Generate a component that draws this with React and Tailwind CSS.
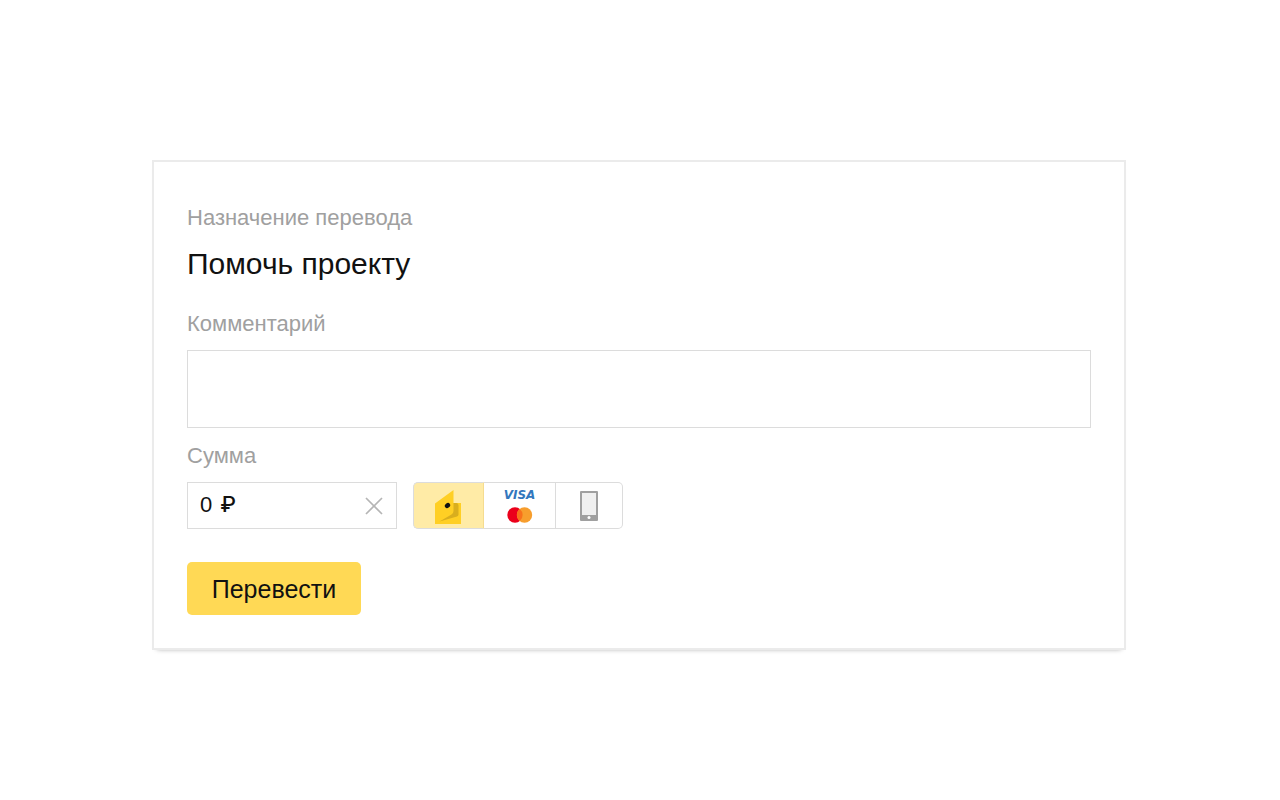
import { useState } from "react";

function WalletIcon() {
  return (
    <svg width="27" height="34" viewBox="0 0 27 34" className="mt-[2px]" aria-hidden="true">
      <path d="M0 13.500 18.500 0V13H26V34H0Z" fill="#ffcf24" />
      <path d="M18.500 13H21.500Q23.500 13 23.500 15.500V24.500Q23.500 26 22 26.500L4.500 31.500 16.500 24.500Q18.500 23.300 18.500 21Z" fill="#d9ae1e" />
      <ellipse cx="12.500" cy="15.500" rx="2.300" ry="2.900" transform="rotate(50 12.500 15.500)" fill="#111" />
    </svg>
  );
}

function CardsIcon() {
  return (
    <svg width="26" height="16" viewBox="0 0 26 16" aria-hidden="true">
      <circle cx="8" cy="8" r="7.700" fill="#eb001b" />
      <circle cx="17.500" cy="8" r="7.700" fill="#f79e2d" />
      <path d="M12.750 2a7.700 7.700 0 0 1 0 12 7.700 7.700 0 0 1 0-12Z" fill="#f8701b" />
    </svg>
  );
}

function PhoneIcon() {
  return (
    <svg width="18" height="30" viewBox="0 0 18 30" aria-hidden="true">
      <rect width="18" height="30" rx="1" fill="#a0a0a0" />
      <rect x="2" y="2" width="14" height="22" fill="#f0f0f0" />
      <circle cx="9" cy="26.500" r="1.500" fill="#fff" />
    </svg>
  );
}

const labelClass = "block text-[22px] leading-7 text-[#a0a0a0]";
const optionClass =
  "relative flex cursor-pointer items-center justify-center border-y border-[#dcdcdc] has-checked:bg-[#ffeba6] has-focus-visible:outline-2";

export default function App() {
  const [comment, setComment] = useState("");
  const [amount, setAmount] = useState("0");
  const [method, setMethod] = useState("wallet");

  return (
    <main className="min-h-screen bg-white pt-40 pr-[154px] pb-10 pl-[152px] font-['Liberation_Sans',Arial,sans-serif] text-[#111]">
      <form
        onSubmit={(e) => e.preventDefault()}
        className="border-2 border-[#ebebeb] px-[33px] pt-[42px] pb-[33px] shadow-[0_4px_5px_-5px_rgba(0,0,0,0.4)]"
      >
        <p className={labelClass}>Назначение перевода</p>
        <h1 className="mt-3 text-[30px] leading-10">Помочь проекту</h1>

        <label htmlFor="comment" className={`${labelClass} mt-[26px]`}>
          Комментарий
        </label>
        <textarea
          id="comment"
          value={comment}
          onChange={(e) => setComment(e.target.value)}
          className="mt-3 block h-[78px] w-full resize-none border border-[#dcdcdc] px-3 py-2 text-[22px] outline-none"
        />

        <label htmlFor="amount" className={`${labelClass} mt-[14px]`}>
          Сумма
        </label>
        <div className="mt-3 flex flex-wrap gap-4">
          <div className="flex h-[47px] w-[210px] items-center border border-[#dcdcdc] px-3">
            <div className="flex min-w-0 flex-1 items-baseline gap-2 pb-[2px] leading-7">
              <input
                id="amount"
                value={amount}
                onChange={(e) => setAmount(e.target.value)}
                className="field-sizing-content max-w-32 min-w-3 text-[22px] outline-none"
              />
              <span className="font-['Inter',sans-serif] text-[22px] font-medium">₽</span>
            </div>
            <button type="button" aria-label="Очистить" onClick={() => setAmount("")}>
              <svg width="20" height="20" viewBox="0 0 20 20" fill="none" stroke="#b5b5b5" strokeWidth="1.700" aria-hidden="true">
                <path d="M2 2 18 18M18 2 2 18" />
              </svg>
            </button>
          </div>

          <div role="radiogroup" aria-label="Способ оплаты" className="flex h-[47px]">
            <label className={`${optionClass} w-[71px] rounded-l-[5px] border-x has-checked:border-r-[#f5dc90]`}>
              <input type="radio" name="method" aria-label="Кошелёк" className="sr-only" checked={method === "wallet"} onChange={() => setMethod("wallet")} />
              <WalletIcon />
            </label>
            <label className={`${optionClass} w-[72px] flex-col border-r pb-[2px]`}>
              <input type="radio" name="method" aria-label="Банковская карта" className="sr-only" checked={method === "card"} onChange={() => setMethod("card")} />
              <span className="mb-1 font-['DejaVu_Sans',sans-serif] text-[12px] leading-4 font-bold text-[#3277bd] italic">VISA</span>
              <CardsIcon />
            </label>
            <label className={`${optionClass} w-[67px] rounded-r-[5px] border-r`}>
              <input type="radio" name="method" aria-label="Мобильный телефон" className="sr-only" checked={method === "phone"} onChange={() => setMethod("phone")} />
              <PhoneIcon />
            </label>
          </div>
        </div>

        <button type="submit" className="mt-[33px] block h-[53px] w-[174px] cursor-pointer rounded-[5px] bg-[#ffd955] text-[25px] leading-8">
          Перевести
        </button>
      </form>
    </main>
  );
}
